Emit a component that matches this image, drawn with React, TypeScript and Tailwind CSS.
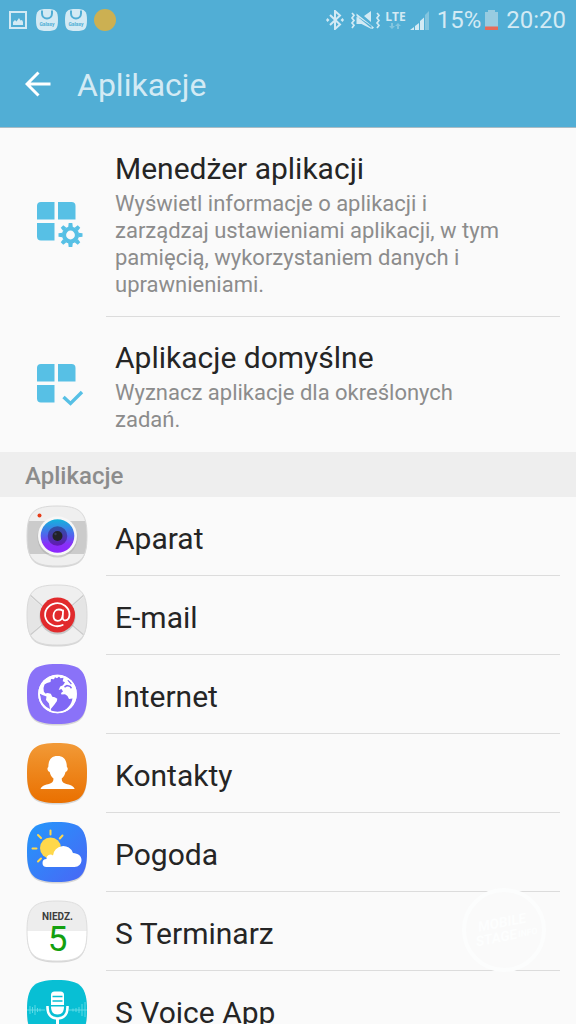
import type { ReactNode } from "react";

const SQUIRCLE = "M31 1C54.500 1 61 7.500 61 31S54.500 61 31 61 1 54.500 1 31 7.500 1 31 1Z";

function AppIcon({ id, fill, edge, children }: { id: string; fill: string; edge?: string; children: ReactNode }) {
  return (
    <svg viewBox="0 0 62 64" className="h-16 w-[62px] shrink-0" aria-hidden="true">
      <defs>
        <clipPath id={`${id}-clip`}>
          <path d={SQUIRCLE} />
        </clipPath>
        <linearGradient id="orange" x1="0" y1="0" x2="0" y2="1">
          <stop offset="0" stopColor="#f29a38" />
          <stop offset=".3" stopColor="#ef8d25" />
          <stop offset="1" stopColor="#ea7000" />
        </linearGradient>
        <linearGradient id="sky" x1="0" y1="0" x2="1" y2="1">
          <stop offset="0" stopColor="#2398fb" />
          <stop offset="1" stopColor="#4a66f5" />
        </linearGradient>
        <linearGradient id="lens" x1="0" y1="0" x2="0" y2="1">
          <stop offset="0" stopColor="#12b4dc" />
          <stop offset=".5" stopColor="#5560ee" />
          <stop offset=".75" stopColor="#8a2ff8" />
          <stop offset="1" stopColor="#8c26ff" />
        </linearGradient>
        <linearGradient id="iris" x1="0" y1="0" x2="0" y2="1">
          <stop offset="0" stopColor="#2c55a4" />
          <stop offset="1" stopColor="#6418b4" />
        </linearGradient>
      </defs>
      <path d={SQUIRCLE} fill="#000" opacity=".14" transform="translate(0 1.5)" />
      <path d={SQUIRCLE} fill={fill} />
      <g clipPath={`url(#${id}-clip)`}>{children}</g>
      <path d={SQUIRCLE} fill="none" stroke={edge ?? "none"} />
    </svg>
  );
}

function CameraIcon() {
  return (
    <AppIcon id="camera" fill="#efefef" edge="#d9d9d9">
      <path d="M0 16h62v33H0Z" fill="#cbcbcb" />
      <circle cx="31.500" cy="32.500" r="20" fill="#aaa" opacity=".5" />
      <circle cx="31.500" cy="31" r="19.500" fill="#f7f7f7" />
      <circle cx="31.500" cy="31" r="16.800" fill="url(#lens)" />
      <circle cx="31.500" cy="31" r="9.800" fill="url(#iris)" />
      <circle cx="31.500" cy="31" r="5" fill="#222229" />
      <circle cx="29.500" cy="29" r="1.200" fill="#383c55" />
      <circle cx="13.500" cy="10.500" r="2" fill="#e63c18" />
    </AppIcon>
  );
}

function EmailIcon() {
  return (
    <AppIcon id="email" fill="#efefef" edge="#dadada">
      <path d="M0 9l25 22L0 54ZM62 9L37 31l25 23Z" fill="#e5e5e5" />
      <path d="M3 10l28 25L59 10M3 52l20-17M59 52L39 35" fill="none" stroke="#cacaca" strokeWidth="1.200" />
      <circle cx="31.500" cy="32.500" r="18" fill="#999" opacity=".45" />
      <circle cx="31.500" cy="31" r="17.500" fill="#e12a2c" />
      <path
        d="M36.700 41A12.200 11.500 0 1 1 43.500 30.300c0 3.600-1.700 6-4.200 6-1.800 0-2.800-1.200-2.600-3.200l.4-6.800M36.700 31c-.3 3.500-2.300 5.800-5 5.800-2.500 0-4.200-2-4.200-5 0-3.700 2.300-6.300 5.300-6.300 1.500 0 3 .5 4 1.300"
        fill="none"
        stroke="#fff"
        strokeWidth="1.800"
        strokeLinecap="round"
      />
    </AppIcon>
  );
}

function InternetIcon() {
  return (
    <AppIcon id="internet" fill="#8a72f8">
      <circle cx="31.500" cy="31" r="19.300" fill="#fff" />
      <path
        d="M17.500 25l1-3.500 2.500-1.500 3.500-1 .5-3 3 .3 1-2 2 1 2-1.800 1.500 1.800 3-.5-.8 3.500 2.300 1-2 3-2.800 1.200-1.500 3.500 2.800-1 1.500 2.500-2 1.500.5 1.500 3.500-.3 2.500 1.800 1.500 3 3.500-.5c-1 5.500-4 9.700-9.500 12.500-3.500 1.500-7.500 1.500-11.700.3l-.5-2.300 3.500-4.200 2.500-3.500.5-2.500-2.500-1.500-2.500-.5-1.500-3-3-.8-2.500.5-1.500-2Z"
        fill="#8068f5"
      />
      <path d="M13.500 30.500l3 1.500 4 1.500-.5 3.500 3 3.500 1 5.500c-5-2-9.500-7-9.500-12.500Z" fill="#8a72f8" />
      <path d="M38.500 24l2.500-1.500 3 .8 1.500 2M42 17l3.500 4" fill="none" stroke="#8068f5" strokeWidth="1.500" />
      <circle cx="31.500" cy="31" r="18.500" fill="none" stroke="#fff" strokeWidth="1.600" />
    </AppIcon>
  );
}

function ContactsIcon() {
  return (
    <AppIcon id="contacts" fill="url(#orange)">
      <path
        d="M14.500 47c1-3 5-4.200 9-5.200 2.700-.8 4-2 4-5.300-2-1.500-3.200-3.500-3.800-6.500-2.300-.3-3-4.200-1.400-5 .2-7.500 3.200-11 9.200-11s9.200 3.500 9.400 11c1.600.8.9 4.700-1.400 5-.6 3-1.800 5-3.800 6.500 0 3.300 1.300 4.500 4 5.300 4 1 8 2.200 9 5.200Z"
        fill="#fff"
      />
    </AppIcon>
  );
}

function WeatherIcon() {
  return (
    <AppIcon id="weather" fill="url(#sky)">
      <circle cx="24.500" cy="27" r="10.500" fill="#ffd84a" />
      <path
        d="M24.500 9.500v4M12 14l3 3M36.500 14.500l-2.700 3M6.500 27.500h4M12 40.500l3-3"
        stroke="#ffd84a"
        strokeWidth="2"
        strokeLinecap="round"
      />
      <path
        d="M20.500 46a4 4 0 0 1 0-8 4 4 0 0 1 6.500-3.500A10.300 10.300 0 0 1 47 32c5 .3 8.500 3 8.500 7s-3 7-7 7Z"
        fill="#fff"
      />
    </AppIcon>
  );
}

function CalendarIcon() {
  return (
    <AppIcon id="calendar" fill="#fff" edge="#dedede">
      <path d="M0 0h62v31H0Z" fill="#ededed" />
      <text x="31.500" y="19.500" textAnchor="middle" className="fill-[#3d3d3d] font-[Roboto,sans-serif] text-[10px] font-bold">
        NIEDZ.
      </text>
      <text x="31.500" y="51" textAnchor="middle" className="fill-[#14a010] font-[Roboto,sans-serif] text-[35px]">
        5
      </text>
    </AppIcon>
  );
}

function VoiceIcon() {
  return (
    <AppIcon id="voice" fill="#08bfd4">
      <path
        d="M1 31h18M43 31h18M4 27v8M6.500 28v6M9 26v10M11.500 29v4M14 29.500v3M47 29.500v3M50 29v4M53 28v6M56 25v12M59 23v15"
        stroke="#67dce8"
        strokeWidth=".9"
      />
      <path d="M25 16a3.500 3.500 0 0 1 3.500-3.500h6A3.500 3.500 0 0 1 38 16v10H25Z" fill="#fff" />
      <path d="M26.500 17.500h10M26.500 22h10" stroke="#08bfd4" strokeWidth="1.300" />
      <path d="M25 27.500h13c0 5-2 8-6.500 8s-6.500-3-6.500-8Z" fill="#fff" />
      <path d="M21.500 27v1.500c0 7 4 11 10 11s10-4 10-11V27" fill="none" stroke="#fff" strokeWidth="2.600" />
      <path d="M31.500 40v7M25 48h13" stroke="#fff" strokeWidth="3" />
    </AppIcon>
  );
}

function Tiles({ children }: { children: ReactNode }) {
  return (
    <svg viewBox="0 0 62 62" className="size-[62px] shrink-0" fill="#57c0e5" aria-hidden="true">
      <path d="M15 10h13.500v17.500H11V14a4 4 0 0 1 4-4ZM32 10h13.500a4 4 0 0 1 4 4v13.500H32ZM11 31h17.500v17.500H15a4 4 0 0 1-4-4Z" />
      {children}
    </svg>
  );
}

function ManagerIcon() {
  return (
    <Tiles>
      <g transform="translate(44.500 43)">
        <circle r="6.500" fill="none" stroke="#57c0e5" strokeWidth="4.200" />
        {[0, 45, 90, 135, 180, 225, 270, 315].map((a) => (
          <path key={a} d="M-2.300-8L-1.800-12h3.600L2.300-8Z" transform={`rotate(${a})`} />
        ))}
      </g>
    </Tiles>
  );
}

function DefaultsIcon() {
  return (
    <Tiles>
      <path d="M37.500 43l7 6.500L56 38" fill="none" stroke="#57c0e5" strokeWidth="3.400" />
    </Tiles>
  );
}

function GalaxyBag() {
  return (
    <svg viewBox="0 0 22 22" className="size-[22px]" aria-hidden="true">
      <path d="M11 0c9 0 11 2 11 11s-2 11-11 11S0 20 0 11 2 0 11 0Z" fill="#d3eaf4" />
      <path d="M6 1.500v3a5 5 0 0 0 10 0v-3" fill="none" stroke="#51aed5" strokeWidth="2" />
      <text x="11" y="17" textAnchor="middle" className="fill-[#51aed5] font-[Roboto,sans-serif] text-[5px] font-bold">
        Galaxy
      </text>
    </svg>
  );
}

function StatusBar() {
  return (
    <div className="flex h-10 items-center justify-between pr-[10px] pl-[9px] text-[24px] leading-[28px] text-[#d3eaf4]">
      <div className="flex items-center gap-[7px]">
        <svg viewBox="0 0 18 18" className="mr-[2px] size-[18px]" aria-hidden="true">
          <rect x="1" y="1" width="16" height="16" fill="none" stroke="#d3eaf4" strokeWidth="2" />
          <path d="M4 14v-3l2-2 1.500 1.500L10 7l1.500 2.500L13 9l1 2v3Z" fill="#d3eaf4" />
        </svg>
        <GalaxyBag />
        <GalaxyBag />
        <span className="size-[22px] rounded-full bg-[#ccb052]" />
      </div>
      <div className="flex items-center">
        <svg viewBox="0 0 18 20" className="h-5 w-[18px]" aria-hidden="true">
          <path d="M4 5l10 9.500-5 4.500V1l5 4.500L4 15" fill="none" stroke="#d3eaf4" strokeWidth="2" />
          <path d="M1.500 8L3.500 10l-2 2L0 10ZM16.500 8L18 10l-1.500 2L14.500 10Z" fill="#d3eaf4" />
        </svg>
        <svg viewBox="0 0 30 20" className="ml-[6px] h-5 w-[30px]" aria-hidden="true">
          <path
            d="M2 3l2 2.300L2 8l2 2.500L2 13l2 2.300L2 18M27 3l2 2.300L27 8l2 2.500L27 13l2 2.300L27 18"
            fill="none"
            stroke="#d3eaf4"
            strokeWidth="1.700"
          />
          <path d="M6.500 3.500L24 17.500 22.500 19 6.500 6ZM6.500 7v7h5L21.500 19v-3L9 7.500ZM14 6l7-5v11Z" fill="#d3eaf4" />
        </svg>
        <div className="ml-[5px] flex flex-col items-center">
          <span className="font-['Open_Sans',sans-serif] text-[12px] leading-[12px] font-bold">LTE</span>
          <svg viewBox="0 0 12 6" className="h-[6px] w-3" aria-hidden="true">
            <path d="M2 0h2v3h2L3 6 0 3h2ZM8 6h2V3h2L9 0 6 3h2Z" fill="#83c5df" />
          </svg>
        </div>
        <svg viewBox="0 0 20 20" className="ml-[4px] h-5 w-5" aria-hidden="true">
          <path d="M0 20l4-3v3ZM5 16l4-3v7H5ZM10 11l4-3.500V20h-4Z" fill="#d3eaf4" />
          <path d="M15 5l4-4v19h-4Z" fill="#83c5df" />
        </svg>
        <span className="ml-[7px]">15%</span>
        <svg viewBox="0 0 13 20" className="ml-[4px] h-5 w-[13px]" aria-hidden="true">
          <path d="M3 0h7v2h3v15H0V2h3Z" fill="#98cce1" />
          <path d="M0 16.500h13V20H0Z" fill="#e76b59" />
        </svg>
        <span className="ml-[8px]">20:20</span>
      </div>
    </div>
  );
}

const settings = [
  {
    title: "Menedżer aplikacji",
    text: "Wyświetl informacje o aplikacji i zarządzaj ustawieniami aplikacji, w tym pamięcią, wykorzystaniem danych i uprawnieniami.",
    icon: <ManagerIcon />,
  },
  { title: "Aplikacje domyślne", text: "Wyznacz aplikacje dla określonych zadań.", icon: <DefaultsIcon /> },
];

const apps = [
  { name: "Aparat", icon: <CameraIcon /> },
  { name: "E-mail", icon: <EmailIcon /> },
  { name: "Internet", icon: <InternetIcon /> },
  { name: "Kontakty", icon: <ContactsIcon /> },
  { name: "Pogoda", icon: <WeatherIcon /> },
  { name: "S Terminarz", icon: <CalendarIcon /> },
  { name: "S Voice App", icon: <VoiceIcon /> },
];

export default function App() {
  return (
    <div className="relative flex h-screen flex-col overflow-hidden bg-[#fafafa] font-[Roboto,sans-serif] text-[#252525]">
      <header className="shrink-0 border-b border-[#a9bcc5] bg-[#51aed5]">
        <StatusBar />
        <div className="flex h-[87px] items-center pl-[25px]">
          <button type="button" aria-label="Wstecz">
            <svg viewBox="0 0 26 26" className="size-[26px]" fill="none" stroke="#fff" strokeWidth="3" aria-hidden="true">
              <path d="M13.500 1.500L2 13l11.500 11.500M2 13h23.500" />
            </svg>
          </button>
          <h1 className="ml-[26px] pt-[2px] text-[32px] leading-[40px] text-[#d3eaf4]">Aplikacje</h1>
        </div>
      </header>

      <main className="min-h-0 flex-1 overflow-y-auto [scrollbar-width:none]">
        <ul>
          {settings.map((s) => (
            <li key={s.title} className="group">
              <a href="#" className="flex items-center pr-4 pl-[26px]">
                {s.icon}
                <div className="ml-[18px] flex-1 border-b border-[#dcdcdc] pt-[23px] pr-[40px] pb-[18px] pl-[9px] group-last:border-transparent">
                  <h2 className="text-[30px] leading-[36px]">{s.title}</h2>
                  <p className="mt-[3px] text-[22px] leading-[27px] text-[#8c8c8c]">{s.text}</p>
                </div>
              </a>
            </li>
          ))}
        </ul>
        <h2 className="bg-[#eeeeee] pt-[10px] pb-[7px] pl-[25px] text-[24px] leading-[28px] font-medium text-[#8c8c8c]">
          Aplikacje
        </h2>
        <ul>
          {apps.map((app) => (
            <li key={app.name}>
              <a href="#" className="flex h-[79px] items-center pr-4 pl-[26px]">
                {app.icon}
                <span className="ml-[18px] flex h-full flex-1 items-center border-b border-[#dcdcdc] pt-[6px] pl-[9px] text-[30px] leading-[36px]">
                  {app.name}
                </span>
              </a>
            </li>
          ))}
        </ul>
      </main>

      <svg viewBox="0 0 84 84" className="pointer-events-none absolute right-[30px] bottom-[52px] size-[84px]" aria-hidden="true">
        <circle cx="42" cy="42" r="40" fill="none" stroke="#fcfdfd" strokeWidth="4" />
        <g transform="rotate(-11 42 42)" className="fill-[#fdfefe] font-[Roboto,sans-serif] font-bold italic">
          <text x="17" y="39" className="text-[14px]">MOBILE</text>
          <text x="12" y="53" className="text-[14px]">STAGE</text>
          <text x="55" y="52" className="text-[9px]">INFO</text>
        </g>
      </svg>
    </div>
  );
}
